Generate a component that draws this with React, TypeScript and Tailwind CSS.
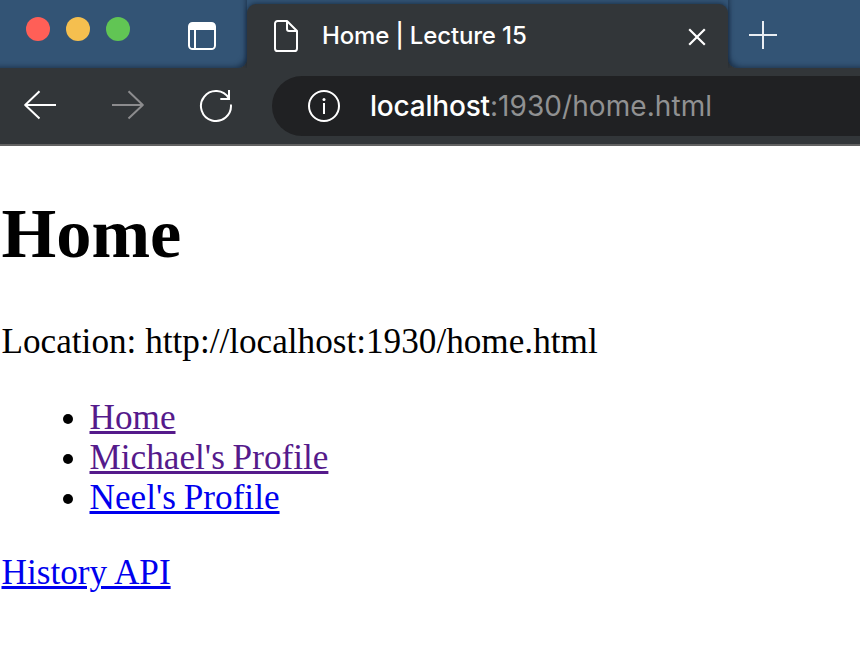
import type { ReactNode } from "react";

function TrafficLights() {
  return (
    <div className="flex gap-4 pl-[26px] pt-[17px]">
      <span className="size-6 rounded-full bg-[#ff5f57]" />
      <span className="size-6 rounded-full bg-[#f5bf4f]" />
      <span className="size-6 rounded-full bg-[#61c554]" />
    </div>
  );
}

function TabActionsIcon() {
  return (
    <svg width="28" height="28" viewBox="0 0 28 28" fill="none" className="ml-[58px] mt-[22px] shrink-0">
      <rect x="1" y="1" width="26" height="26" rx="3.6" stroke="white" strokeWidth="2" />
      <path d="M1 8V4a3 3 0 0 1 3-3h20a3 3 0 0 1 3 3v4z" fill="white" />
      <path d="M7 8v19" stroke="white" strokeWidth="2" />
    </svg>
  );
}

function Tab() {
  return (
    <div className="w-[481px] shrink-0 bg-linear-to-b from-[#335475] from-50% to-[#323639] to-50% pt-1">
      <div className="flex h-16 items-center rounded-t-[9px] bg-[#323639] pl-[26px] shadow-[0_-1px_4px_rgba(10,25,45,0.55)] [clip-path:inset(-4px_-4px_0_-4px)]">
        <svg width="26" height="34" viewBox="0 0 26 34" fill="none" className="shrink-0">
          <path
            d="M4.6 2H14L24 12V29.4A2.6 2.6 0 0 1 21.4 32H4.6A2.6 2.6 0 0 1 2 29.4V4.6A2.6 2.6 0 0 1 4.6 2ZM14 2V10A2 2 0 0 0 16 12H24"
            stroke="white"
            strokeWidth="2"
            strokeLinejoin="round"
          />
        </svg>
        <span className="ml-[23px] w-[366px] whitespace-nowrap font-['Inter',sans-serif] text-[24px] font-[450] leading-8 tracking-[-0.15px] text-white">
          Home | Lecture 15
        </span>
        <svg width="18" height="18" viewBox="0 0 18 18" fill="none" className="mt-px shrink-0">
          <path d="M1.2 1.2l15.6 15.6M16.8 1.2L1.2 16.8" stroke="white" strokeWidth="2.2" />
        </svg>
      </div>
    </div>
  );
}

function TabStrip() {
  return (
    <div className="flex h-[68px] bg-[#323639]">
      <div className="flex w-[247px] shrink-0 rounded-br-[9px] bg-[#335475] shadow-[inset_-5px_-5px_5px_-4px_rgba(15,30,50,0.6)]">
        <TrafficLights />
        <TabActionsIcon />
      </div>
      <Tab />
      <div className="grow rounded-bl-[9px] bg-[#335475] pl-[21px] pt-[21px] shadow-[inset_5px_-5px_5px_-4px_rgba(15,30,50,0.6)]">
        <svg width="28" height="28" viewBox="0 0 28 28" fill="none">
          <path d="M14 0v28M0 14h28" stroke="#e9edf2" strokeWidth="2" />
        </svg>
      </div>
    </div>
  );
}

function Toolbar() {
  return (
    <div className="flex h-[78px] items-start border-b-2 border-[#626262] bg-[#323639] pl-6 pt-2">
      <svg width="32" height="30" viewBox="0 0 32 30" fill="none" className="mt-[14px] shrink-0">
        <path d="M32 15H1.2M15.5 1.3L1.2 15l14.3 13.5" stroke="white" strokeWidth="2" strokeLinejoin="round" />
      </svg>
      <svg width="32" height="30" viewBox="0 0 32 30" fill="none" className="ml-14 mt-[14px] shrink-0">
        <path d="M0 15h30.8M16.5 1.3L30.8 15l-14.3 13.5" stroke="#8c8c8e" strokeWidth="2" strokeLinejoin="round" />
      </svg>
      <svg width="34" height="34" viewBox="0 0 34 34" fill="none" className="ml-[55px] mt-[13px] shrink-0">
        <path d="M31.9 15.5A15 15 0 1 1 29.9 9.4" stroke="white" strokeWidth="2" />
        <path d="M30 1V10H21.3" stroke="white" strokeWidth="2" />
      </svg>
      <div className="ml-[39px] flex h-[60px] grow items-center rounded-l-full bg-[#202123] pl-9">
        <svg width="32" height="32" viewBox="0 0 32 32" fill="none" className="shrink-0">
          <circle cx="16" cy="16" r="15" stroke="white" strokeWidth="2" />
          <path d="M16 13v11" stroke="white" strokeWidth="2" />
          <circle cx="16" cy="9.5" r="1.5" fill="white" />
        </svg>
        <span className="ml-[30px] whitespace-nowrap font-['Inter',sans-serif] text-[28px] leading-8 tracking-[0.07px] text-[#909192]">
          <span className="font-[450] tracking-[-0.2px] text-white">localhost</span>:1930/home.html
        </span>
      </div>
    </div>
  );
}

function PageLink({ visited = false, children }: { visited?: boolean; children: ReactNode }) {
  return (
    <a
      href="#"
      className={
        visited
          ? "text-[#551a8b] underline decoration-[3px] underline-offset-[2px]"
          : "text-[#0000ee] underline decoration-[3px] underline-offset-[2px]"
      }
    >
      {children}
    </a>
  );
}

export default function App() {
  return (
    <div className="h-[664px] w-[860px] overflow-hidden bg-white">
      <TabStrip />
      <Toolbar />
      <main className="pl-[1.5px] pt-[47px] font-['Liberation_Serif','Times_New_Roman',serif] text-[35.2px] leading-10 text-black">
        <h1 className="text-[70.4px] font-bold leading-20">Home</h1>
        <p className="mt-[49px]">Location: http://localhost:1930/home.html</p>
        <ul className="mt-9 list-disc pl-[88px] [word-spacing:-1px]">
          <li><PageLink visited>Home</PageLink></li>
          <li><PageLink visited>Michael's Profile</PageLink></li>
          <li><PageLink>Neel's Profile</PageLink></li>
        </ul>
        <p className="mt-[35px]"><PageLink>History API</PageLink></p>
      </main>
    </div>
  );
}
